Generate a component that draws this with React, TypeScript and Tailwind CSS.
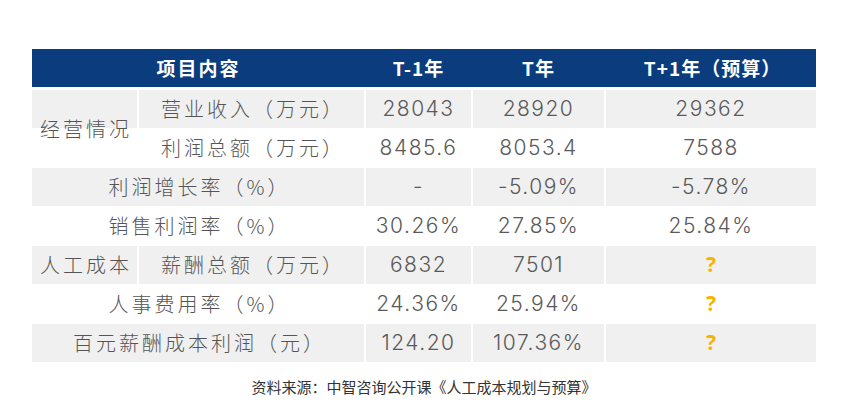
const cjk = "font-['Noto_Sans_CJK_SC','Noto_Sans',sans-serif]";

const cols = "grid grid-cols-[105px_225px_105px_131px_210px] gap-x-[2px]";

function Num({ text }: { text: string }) {
  if (text === "?") {
    return <span className="text-[21px] font-bold text-[#f5b400]">?</span>;
  }
  return (
    <span className="font-['Inter','Liberation_Sans',sans-serif] text-[21px] font-light tracking-[1.5px] text-[#5a5a5a]">
      {text}
    </span>
  );
}

function Label({ text }: { text: string }) {
  return (
    <span className={`${cjk} pl-[3px] text-[20px] font-light tracking-[3px] text-[#555]`}>{text}</span>
  );
}

const rows: { label: string; wide: boolean; values: string[]; gray: boolean; cat?: string }[] = [
  { label: "营业收入（万元）", wide: false, values: ["28043", "28920", "29362"], gray: true },
  { label: "利润总额（万元）", wide: false, values: ["8485.6", "8053.4", "7588"], gray: false },
  { label: "利润增长率（%）", wide: true, values: ["-", "-5.09%", "-5.78%"], gray: true },
  { label: "销售利润率（%）", wide: true, values: ["30.26%", "27.85%", "25.84%"], gray: false },
  { label: "薪酬总额（万元）", wide: false, values: ["6832", "7501", "?"], gray: true, cat: "人工成本" },
  { label: "人事费用率（%）", wide: true, values: ["24.36%", "25.94%", "?"], gray: false },
  { label: "百元薪酬成本利润（元）", wide: true, values: ["124.20", "107.36%", "?"], gray: true }
];

export default function App() {
  return (
    <div className="h-[418px] w-[851px] overflow-hidden bg-white pl-[32px] pt-[49px]">
      <div className="w-[784px]">
        <div className="grid h-[38px] grid-cols-[333px_107px_133px_211px] items-center bg-[#0b3d7e] text-[19px] font-bold text-white">
          <span className={`${cjk} text-center tracking-[2px]`}>项目内容</span>
          <span className={`${cjk} text-center tracking-[1px]`}>T-1年</span>
          <span className={`${cjk} text-center tracking-[1px]`}>T年</span>
          <span className={`${cjk} pl-[4px] text-center tracking-[1px]`}>T+1年（预算）</span>
        </div>

        <div className={`${cols} mt-[3px] auto-rows-[38px] gap-y-[1px]`}>
          {rows.map((r, i) => {
            const bg = r.gray ? "bg-[#f0f0f0]" : "bg-white";
            return (
              <div key={i} className="contents">
                {i === 0 ? (
                  <div className="row-span-2 flex items-center justify-center bg-[linear-gradient(to_bottom,#f0f0f0_38px,#fff_38px)]">
                    <Label text="经营情况" />
                  </div>
                ) : null}
                {r.cat ? (
                  <div className={`flex items-center justify-center ${bg}`}>
                    <Label text={r.cat} />
                  </div>
                ) : null}
                <div
                  className={`flex items-center justify-center ${bg} ${r.wide ? "col-span-2" : ""}`}
                >
                  <Label text={r.label} />
                </div>
                {r.values.map((v, j) => (
                  <div key={j} className={`flex items-center justify-center ${bg}`}>
                    <Num text={v} />
                  </div>
                ))}
              </div>
            );
          })}
        </div>

        <p className={`${cjk} mt-[14px] text-center text-[15px] text-[#333]`}>
          资料来源：中智咨询公开课《人工成本规划与预算》
        </p>
      </div>
    </div>
  );
}
